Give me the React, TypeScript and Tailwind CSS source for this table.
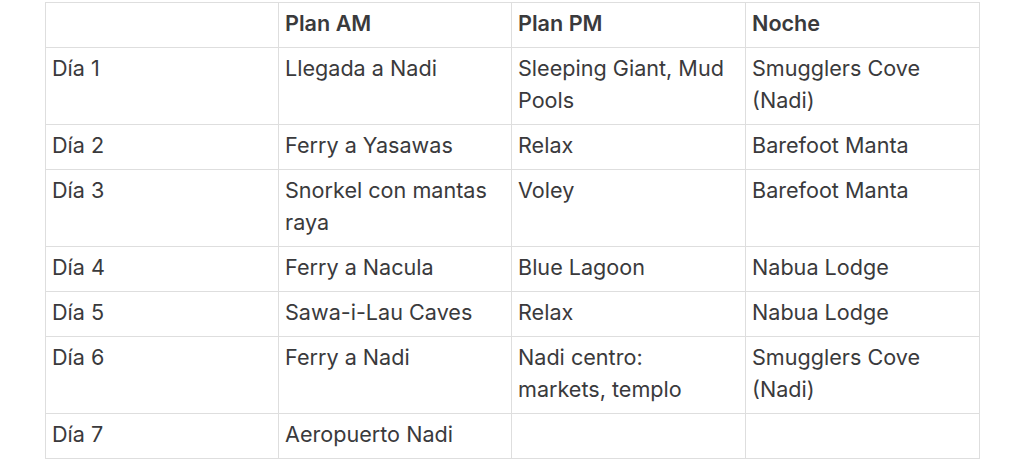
const rows: [string, string[], string[], string[]][] = [
  ["Día 1", ["Llegada a Nadi"], ["Sleeping Giant, Mud", "Pools"], ["Smugglers Cove", "(Nadi)"]],
  ["Día 2", ["Ferry a Yasawas"], ["Relax"], ["Barefoot Manta"]],
  ["Día 3", ["Snorkel con mantas", "raya"], ["Voley"], ["Barefoot Manta"]],
  ["Día 4", ["Ferry a Nacula"], ["Blue Lagoon"], ["Nabua Lodge"]],
  ["Día 5", ["Sawa-i-Lau Caves"], ["Relax"], ["Nabua Lodge"]],
  ["Día 6", ["Ferry a Nadi"], ["Nadi centro:", "markets, templo"], ["Smugglers Cove", "(Nadi)"]],
  ["Día 7", ["Aeropuerto Nadi"], [], []],
]

const cell = "border border-[#dedede] pl-[6px] pr-[6px] pt-[4px] pb-[8px] align-top text-left whitespace-nowrap"

function Lines({ lines }: { lines: string[] }) {
  return (
    <>
      {lines.map((l, i) => (
        <div key={i}>{l}</div>
      ))}
    </>
  )
}

export default function App() {
  return (
    <div className="w-[1024px] h-[464px] bg-white pt-[2px] pl-[45px] overflow-hidden">
      <table
        className="table-fixed border-collapse w-[934px] text-[21.6px] leading-[32px] text-[#3a3a3c]"
        style={{ fontFamily: "Inter, 'Noto Sans', sans-serif" }}
      >
        <colgroup>
          <col className="w-[233px]" />
          <col className="w-[233px]" />
          <col className="w-[234px]" />
          <col className="w-[234px]" />
        </colgroup>
        <thead>
          <tr>
            <th className={cell}></th>
            <th className={`${cell} font-semibold`}>Plan AM</th>
            <th className={`${cell} font-semibold`}>Plan PM</th>
            <th className={`${cell} font-semibold`}>Noche</th>
          </tr>
        </thead>
        <tbody>
          {rows.map(([d, am, pm, noche]) => (
            <tr key={d}>
              <td className={cell}>{d}</td>
              <td className={cell}><Lines lines={am} /></td>
              <td className={cell}><Lines lines={pm} /></td>
              <td className={cell}><Lines lines={noche} /></td>
            </tr>
          ))}
        </tbody>
      </table>
    </div>
  )
}
